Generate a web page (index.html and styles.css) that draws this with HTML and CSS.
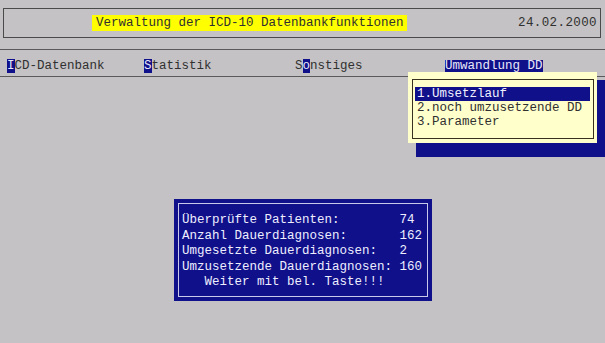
FILE: index.html
```html
<!DOCTYPE html>
<html>
<head>
<meta charset="utf-8">
<link rel="stylesheet" href="styles.css">
</head>
<body>
<div class="screen">
  <header class="titlebar">
    <span class="title">Verwaltung der ICD-10 Datenbankfunktionen</span>
    <span class="date">24.02.2000</span>
  </header>
  <nav class="menubar">
    <span class="item"><span class="hot">I</span>CD-Datenbank</span>
    <span class="item"><span class="hot">S</span>tatistik</span>
    <span class="item">S<span class="hot">o</span>nstiges</span>
    <span class="item"><span class="active">Umwandlung DD</span></span>
  </nav>

  <div class="shadow"></div>
  <div class="popup">
    <div class="popup-inner">
      <div class="opt sel">1.Umsetzlauf</div>
      <div class="opt">2.noch umzusetzende DD</div>
      <div class="opt">3.Parameter</div>
    </div>
  </div>

  <div class="dialog">
    <div class="dialog-inner"><pre class="msg">Überprüfte Patienten:        74
Anzahl Dauerdiagnosen:       162
Umgesetzte Dauerdiagnosen:   2
Umzusetzende Dauerdiagnosen: 160
   Weiter mit bel. Taste!!!</pre></div>
  </div>
</div>
</body>
</html>
```
FILE: styles.css
```css
html, body {
  margin: 0;
  padding: 0;
  background: #c4c2c4;
}
body {
  font-family: "Liberation Mono", "Courier New", monospace;
  font-size: 12.5px;
  color: #303030;
}
.screen {
  position: relative;
  width: 605px;
  height: 343px;
  overflow: hidden;
}
.titlebar {
  margin: 8px 4px 0 3px;
  height: 28px;
  border: 1px solid #4a4a4a;
  display: flex;
  align-items: center;
}
.title {
  margin-left: 88px;
  background: #ffff00;
  padding: 0 3px 0 4px;
  line-height: 16px;
}
.date {
  margin-left: auto;
  margin-right: 3px;
  letter-spacing: 0.4px;
}
.menubar {
  margin-top: 11px;
  height: 28px;
  box-sizing: border-box;
  padding-top: 5px;
  border-top: 1px solid #5a5a5a;
  border-bottom: 1px solid #5a5a5a;
  display: grid;
  grid-template-columns: 137px 151px 150px auto;
  padding-left: 7px;
  align-items: center;
}
.hot {
  background: #10108a;
  color: #e8e8f8;
  display: inline-block;
  line-height: 14px;
}
.active {
  background: #10108a;
  color: #e8e8f8;
  display: inline-block;
  line-height: 13px;
}
.shadow {
  position: absolute;
  left: 416px;
  top: 80px;
  width: 195px;
  height: 77px;
  background: #10108a;
}
.popup {
  position: absolute;
  left: 408px;
  top: 72px;
  width: 189px;
  box-sizing: border-box;
  background: #ffffcc;
  padding: 7px 3px 4px 4px;
}
.popup-inner {
  border: 1px solid #3a3020;
  padding: 7px 3px 9px 2px;
}
.opt {
  line-height: 14px;
  padding-left: 2px;
  white-space: pre;
}
.opt.sel {
  background: #10108a;
  color: #f0f0ff;
}
.dialog {
  position: absolute;
  left: 174px;
  top: 199px;
  width: 258px;
  height: 102px;
  box-sizing: border-box;
  background: #10108a;
  padding: 4px;
}
.dialog-inner {
  height: 100%;
  box-sizing: border-box;
  border: 1px solid #c8c8e8;
  padding: 9px 3px 0;
}
.msg {
  margin: 0;
  font: inherit;
  line-height: 15.5px;
  color: #eeeeff;
}
```
